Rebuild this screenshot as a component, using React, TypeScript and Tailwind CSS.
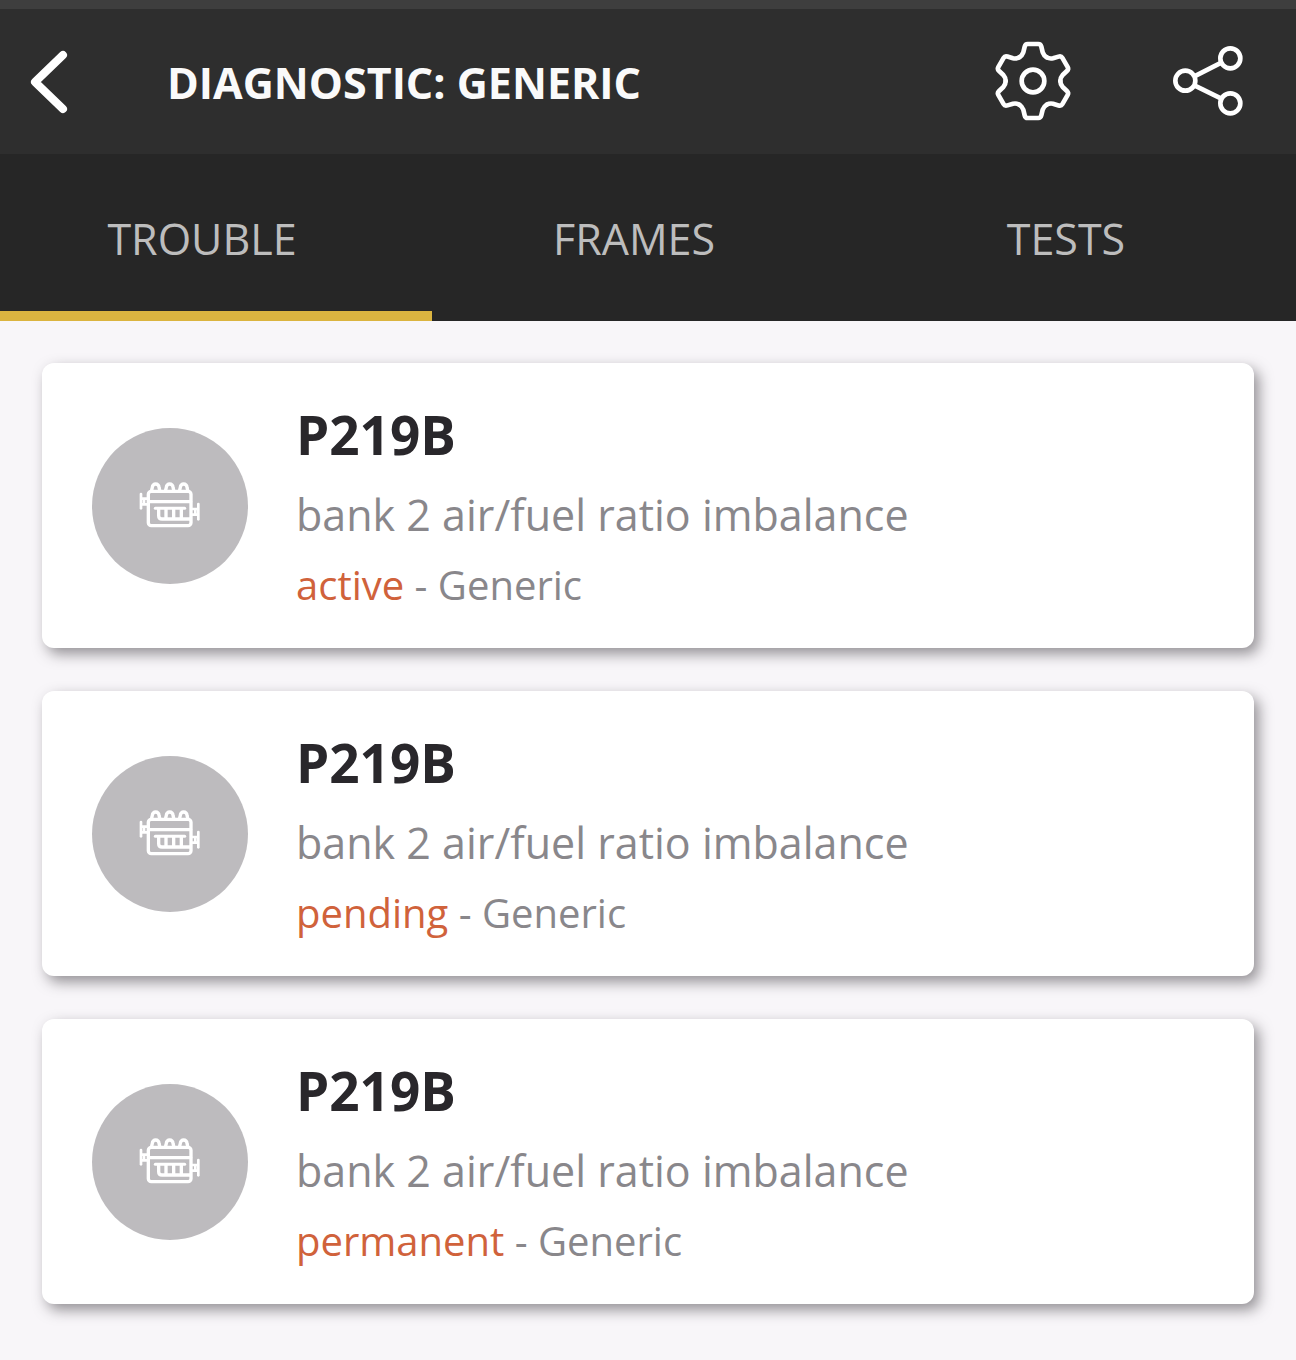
const GEAR_ANGLES = [0, 60, 120, 180, 240, 300];

const TABS = ["TROUBLE", "FRAMES", "TESTS"];

const CODES = [
  { status: "active", code: "P219B", description: "bank 2 air/fuel ratio imbalance", source: "Generic" },
  { status: "pending", code: "P219B", description: "bank 2 air/fuel ratio imbalance", source: "Generic" },
  { status: "permanent", code: "P219B", description: "bank 2 air/fuel ratio imbalance", source: "Generic" },
];

function BackIcon() {
  return (
    <svg viewBox="0 0 38 64" className="h-16 w-[38px]" fill="none" stroke="currentColor" strokeWidth="8" strokeLinecap="round" strokeLinejoin="round" aria-hidden="true">
      <path d="M33 5 L5 32 L33 59" />
    </svg>
  );
}

function GearIcon() {
  return (
    <svg viewBox="-120 -120 240 240" className="size-20" fill="none" stroke="currentColor" strokeWidth="14" strokeLinecap="round" strokeLinejoin="round" aria-hidden="true">
      {GEAR_ANGLES.map((a) => (
        <path
          key={a}
          transform={`rotate(${a})`}
          d="M-41 -71 C-34 -75 -31 -80 -29 -86 L-25 -103 Q-23 -111 -16 -111 L16 -111 Q23 -111 25 -103 L29 -86 C31 -80 34 -75 41 -71"
        />
      ))}
      <circle r="34" />
    </svg>
  );
}

function ShareIcon() {
  return (
    <svg viewBox="0 0 210 210" className="size-[70px]" fill="none" stroke="currentColor" strokeWidth="14" aria-hidden="true">
      <circle cx="37" cy="104" r="30" />
      <circle cx="172" cy="37" r="30" />
      <circle cx="172" cy="172" r="30" />
      <path d="M64 91 L145 50 M64 118 L145 158" />
    </svg>
  );
}

function EngineIcon() {
  return (
    <svg viewBox="30 36 183 141" className="h-[47px] w-[61px] overflow-visible" fill="none" stroke="currentColor" strokeWidth="10" strokeLinecap="round" strokeLinejoin="round" aria-hidden="true">
      <rect x="55" y="64" width="128" height="103" rx="9" />
      <path d="M57 95 H182" />
      <path d="M65 60 L67 52 A10 10 0 0 1 87 52 L89 60" />
      <path d="M107 60 L109 52 A10 10 0 0 1 129 52 L131 60" />
      <path d="M149 60 L151 52 A10 10 0 0 1 171 52 L173 60" />
      <path d="M33 72 V115" strokeWidth="8" />
      <path d="M35 86 H53 M35 103 H53 M42 88 V101" strokeWidth="8" />
      <path d="M205 102 V148" strokeWidth="8" />
      <path d="M203 117 H185 M203 134 H185 M196 119 V132" strokeWidth="8" />
      <path d="M76 115 H164" strokeWidth="9" />
      <path d="M86 117 V137 Q86 147 96 147 H180" />
      <path d="M108 117 V143 M131 117 V143 M154 117 V143" />
    </svg>
  );
}

export default function App() {
  return (
    <div className="min-h-screen bg-[#f8f6f9] font-['Open_Sans',sans-serif]">
      <header className="flex h-[154px] items-center border-t-[9px] border-[#3e3e3e] bg-[#2e2e2e] pr-[53px] pl-[30px] text-white">
        <button type="button" aria-label="Back">
          <BackIcon />
        </button>
        <h1 className="ml-[99px] flex-1 pt-0.5 text-[43px] leading-[60px] font-bold text-[#fafafa]">DIAGNOSTIC: GENERIC</h1>
        <div className="flex items-center gap-[100px] pb-0.5">
          <button type="button" aria-label="Settings">
            <GearIcon />
          </button>
          <button type="button" aria-label="Share">
            <ShareIcon />
          </button>
        </div>
      </header>

      <nav className="grid h-[167px] grid-cols-3 bg-[#262626]" role="tablist" aria-label="Diagnostic sections">
        {TABS.map((tab, i) => (
          <button
            key={tab}
            type="button"
            role="tab"
            aria-selected={i === 0}
            className="border-b-[10px] border-transparent pt-3 pr-7 text-[43px] leading-[60px] text-[#bdbdbd] aria-selected:border-[#dbb440]"
          >
            {tab}
          </button>
        ))}
      </nav>

      <main className="flex flex-col gap-[43px] px-[42px] py-[42px]">
        {CODES.map((item) => (
          <article
            key={item.status}
            className="flex items-center gap-12 rounded-xl bg-white py-7 pr-8 pl-[50px] shadow-[5px_6px_14px_0px_rgba(50,46,52,0.5)]"
          >
            <div className="flex size-[156px] shrink-0 items-center justify-center rounded-full bg-[#bdbbbe] text-white">
              <EngineIcon />
            </div>
            <div className="min-w-0 pt-[5px]">
              <h2 className="text-[53px] leading-[78px] font-bold text-[#29272b]">{item.code}</h2>
              <p className="mt-[6px] text-[43px] leading-[70px] text-[#89878b]">{item.description}</p>
              <p className="text-[40px] leading-[70px] text-[#89878b]">
                <span className="text-[#d0623b]">{item.status}</span> - {item.source}
              </p>
            </div>
          </article>
        ))}
      </main>
    </div>
  );
}
